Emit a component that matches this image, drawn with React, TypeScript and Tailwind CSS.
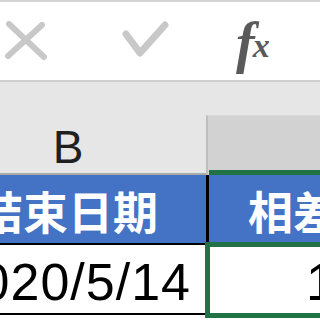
import React from "react";

export default function App() {
  return (
    <div className="w-[320px] h-[320px] overflow-hidden bg-[#e6e6e6] flex flex-col relative" style={{ fontFamily: '"Liberation Sans", Arial, sans-serif' }}>
      <div className="h-[2px] shrink-0 bg-[#d4d4d4]" />
      {/* formula bar */}
      <div className="h-[78px] shrink-0 bg-white flex items-center">
        <div className="w-[56px] flex justify-center">
          <svg width="44" height="40" viewBox="0 0 44 40" className="ml-[-2px]">
            <path d="M4 3 L39 36 M37 4 L3 35" stroke="#c8c8c8" strokeWidth="6" strokeLinecap="round" fill="none" />
          </svg>
        </div>
        <div className="w-[64px]" />
        <svg width="50" height="42" viewBox="0 0 50 42">
          <path d="M6 14 L20 33 L45 5" stroke="#c8c8c8" strokeWidth="7" strokeLinecap="round" strokeLinejoin="round" fill="none" />
        </svg>
        <div className="w-[66px]" />
        <div className="text-[#5a5a5a] italic font-bold leading-none flex items-end mt-[4px]" style={{ fontFamily: '"Liberation Serif", "Times New Roman", serif' }}>
          <span className="text-[56px]">f</span>
          <span className="text-[34px] ml-[-2px] mb-[8px]">x</span>
        </div>
      </div>
      <div className="h-[2px] shrink-0 bg-[#cfcfcf]" />
      <div className="h-[33px] shrink-0" />
      {/* column headers */}
      <div className="h-[60px] shrink-0 flex ml-[-70px]">
        <div className="w-[276px] flex flex-col">
          <div className="flex-1 flex items-center justify-center pt-[6px] text-[46px] leading-none text-[#1f1f1f]">B</div>
          <div className="h-[2px] bg-[#ababab]" />
        </div>
        <div className="flex-1 flex flex-col bg-[#d2d2d2] border-l-2 border-[#bdbdbd] border-t border-t-[#dadada]">
          <div className="flex-1" />
          <div className="h-[5px] bg-[#217346] ml-[1px]" />
        </div>
      </div>
      {/* header row */}
      <div className="h-[68px] shrink-0 flex ml-[-70px] bg-[#4472c4] text-white font-bold text-[45px] leading-none" style={{ fontFamily: '"Noto Sans CJK SC", sans-serif' }}>
        <div className="w-[276px] flex items-center justify-center pt-[2px]">结束日期</div>
        <div className="w-[3px] bg-black" />
        <div className="flex-1 flex items-center pl-[39px] pt-[2px] whitespace-nowrap overflow-hidden">相差天数</div>
      </div>
      <div className="h-[2px] shrink-0 bg-black" />
      {/* data row */}
      <div className="h-[68px] shrink-0 flex ml-[-70px] bg-white text-[52px] leading-none text-black">
        <div className="w-[276px] flex items-center justify-end pr-[15px] pt-[6px] tracking-[1px]">2020/5/14</div>
        <div className="w-[3px] bg-black" />
        <div className="flex-1 flex items-center pl-[97px] pt-[6px] whitespace-nowrap overflow-hidden">1</div>
      </div>
      <div className="h-[2px] shrink-0 bg-black" />
      <div className="flex-1 bg-white" />
      {/* selection box */}
      <div className="absolute left-[205px] top-[242px] w-[130px] h-[76px] border-[5px] border-[#217346]" />
    </div>
  );
}
